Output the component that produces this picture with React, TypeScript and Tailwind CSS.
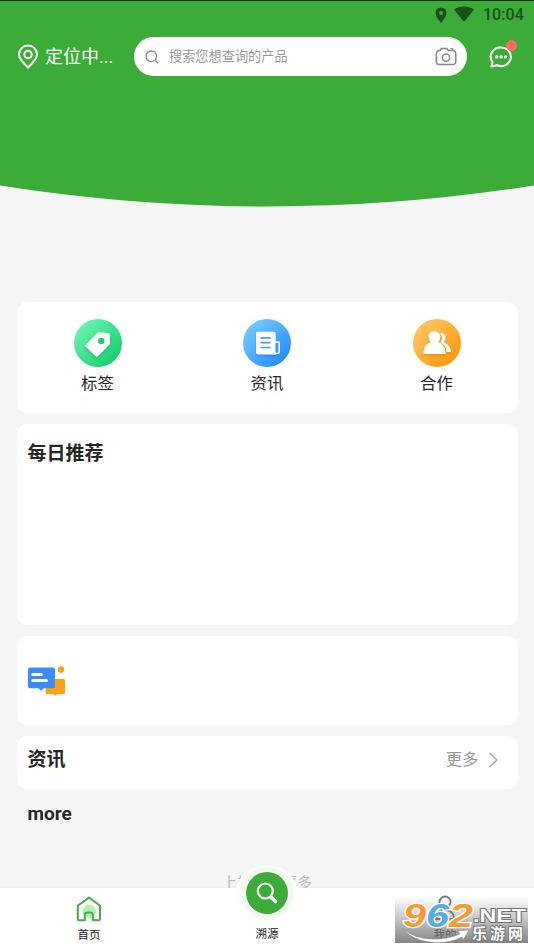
import type { ReactNode } from "react";

const StatusBar = () => (
  <div className="flex h-[29px] items-center justify-end border-t border-[#0d2b0c] pr-[10px] text-[#18521a]">
    <svg width="12" height="16" viewBox="0 0 12 16" fill="currentColor">
      <path fillRule="evenodd" d="M6 .4A5.5 5.5 0 0 0 .5 5.9C.5 10 6 15.8 6 15.8S11.500 10 11.500 5.900A5.500 5.500 0 0 0 6 .4Zm0 3.500a2 2 0 1 1 0 4 2 2 0 0 1 0-4Z" />
    </svg>
    <svg className="ml-[7px] mt-[-2px]" width="20" height="16" viewBox="0 0 20 16" fill="currentColor">
      <path d="M0 3.700C5.700-.6 14.300-.6 20 3.700L10 15.700Z" />
    </svg>
    <span className="ml-[9px] text-[16px] leading-5 font-medium tracking-[0.1px]">10:04</span>
  </div>
);

const Header = () => (
  <header className="h-[207px] shrink-0">
    <div className="h-[185px] bg-[#3bac37]">
      <StatusBar />
      <div className="mt-2 flex h-[39px] items-center">
        <svg className="ml-[17px]" width="22" height="25" viewBox="0 0 22 25" fill="none" stroke="white" strokeWidth="2">
          <path d="M11 1.500a9 9 0 0 0-9 9C2 15.500 7.500 20 11 23.500 14.500 20 20 15.500 20 10.500a9 9 0 0 0-9-9Z" />
          <circle cx="11" cy="10.500" r="3.700" />
        </svg>
        <span className="ml-[6px] w-[89px] text-[18px] leading-6 text-white">定位中...</span>
        <div className="flex h-[39px] w-[333px] items-center rounded-full bg-white pl-[11px] pr-[10px]">
          <svg width="14" height="14" viewBox="0 0 14 14" fill="none" stroke="#8d8d8d" strokeWidth="1.400">
            <circle cx="6.300" cy="6.300" r="5.300" />
            <path d="m10.200 10.200 2.800 3" />
          </svg>
          <span className="ml-[10px] flex-1 text-[13.200px] leading-5 text-[#999]">搜索您想查询的产品</span>
          <svg width="22" height="19" viewBox="0 0 22 19" fill="none" stroke="#858585" strokeWidth="1.500">
            <path d="M5.200 3.600 6.300 1.500H12l1.300 2.100H18a2.800 2.800 0 0 1 2.800 2.800v8.400a2.800 2.800 0 0 1-2.800 2.800H4.200a2.800 2.800 0 0 1-2.800-2.800V6.400a2.800 2.800 0 0 1 2.800-2.800Z" />
            <circle cx="11" cy="10.700" r="3.600" />
            <path d="M15.700 1.700h2.600" />
          </svg>
        </div>
        <div className="relative ml-[22px] h-[24px] w-[30px]">
          <svg width="24" height="24" viewBox="0 0 24 24" fill="none">
            <path d="M12.200 2.500a9.700 9.300 0 1 1-4.600 17.500c-1.500 1-3.200 1.500-5.400 1.500 1-1.400 1.400-2.800 1.200-4.500A9.700 9.300 0 0 1 12.200 2.500Z" stroke="white" strokeWidth="2" strokeLinejoin="round" />
            <circle cx="7.700" cy="11.900" r="1.700" fill="white" />
            <circle cx="12.100" cy="11.900" r="1.700" fill="white" />
            <circle cx="16.500" cy="11.900" r="1.700" fill="white" />
          </svg>
          <span className="absolute left-[17px] top-[-5px] size-[11px] rounded-full bg-[#ff6d60]" />
        </div>
      </div>
    </div>
    <svg className="block h-[22px] w-full" viewBox="0 0 534 22" preserveAspectRatio="none">
      <path d="M0 0V.5Q267 42.500 534 .5V0Z" fill="#3bac37" />
    </svg>
  </header>
);

const TagIcon = () => (
  <svg width="48" height="48" viewBox="0 0 48 48">
    <defs>
      <linearGradient id="tag" x1="0" y1="0" x2="1" y2="1">
        <stop offset="0.100" stopColor="#6cf5b5" />
        <stop offset="0.900" stopColor="#15cc69" />
      </linearGradient>
    </defs>
    <circle cx="24" cy="24" r="24" fill="url(#tag)" />
    <path d="m11.500 26 12-12.200c.5-.5 1-.7 1.700-.6l8.800.7c1 .1 1.600.7 1.700 1.700l.4 8.300c0 .8-.2 1.400-.7 1.900L24 37.200c-.8.800-1.700.8-2.500 0L11.500 27.600c-.5-.5-.5-1.100 0-1.600Z" fill="white" className="drop-shadow-[0_2px_1px_#0b9c4d66]" />
    <circle cx="27.300" cy="22" r="3.200" fill="#25c875" />
  </svg>
);

const NewsIcon = () => (
  <svg width="48" height="48" viewBox="0 0 48 48">
    <defs>
      <linearGradient id="news" x1="0" y1="0" x2="1" y2="1">
        <stop offset="0.100" stopColor="#79cbff" />
        <stop offset="0.900" stopColor="#218dff" />
      </linearGradient>
    </defs>
    <circle cx="24" cy="24" r="24" fill="url(#news)" />
    <g className="drop-shadow-[0_2px_1px_#1468cc66]">
      <path d="M15 12.700h16a1.700 1.700 0 0 1 1.700 1.700v21.200H15.500a2.500 2.500 0 0 1-2.500-2.500V14.400a1.700 1.700 0 0 1 2-1.700Z" fill="white" />
      <path d="M31.700 23h3.500c.6 0 1 .4 1 1v8.600c0 1.200-.8 2-2 2h-2.500Z" fill="#3d9bf5" stroke="white" strokeWidth="1.500" />
    </g>
    <path d="M17.500 18.800h10M17.500 23.700h10M17.500 28.500h10" stroke="#429cf2" strokeWidth="1.700" />
  </svg>
);

const PartnerIcon = () => (
  <svg width="48" height="48" viewBox="0 0 48 48">
    <defs>
      <linearGradient id="partner" x1="0" y1="0" x2="1" y2="1">
        <stop offset="0.100" stopColor="#ffc666" />
        <stop offset="0.900" stopColor="#ff980c" />
      </linearGradient>
    </defs>
    <circle cx="24" cy="24" r="24" fill="url(#partner)" />
    <g fill="white" className="drop-shadow-[0_2px_1px_#cc720066]">
      <path d="M27.200 14.500c2.500-.8 5 .8 5.300 3.800.1 1.900-.5 3.400-1.600 4.400.4 1.300 4 2.300 5.600 5.200.9 1.500 1.500 3.200 1.500 5h-4.400c-.3-5-2.700-7.600-6.500-9.300 2.400-2.500 2.400-6.200.1-9.100Z" />
      <path d="M21.400 12.300c3.400 0 5.900 2.500 5.900 5.800 0 2-.8 3.500-2 4.700.3 1.500 7.200 1.400 7.400 12.200H10.500c.3-10.800 6.800-10.700 7.200-12.200a6.200 6.200 0 0 1-2.200-4.700c0-3.300 2.500-5.800 5.900-5.800Z" />
    </g>
  </svg>
);

const MessageIcon = () => (
  <svg width="38" height="30" viewBox="0 0 38 30">
    <circle cx="33" cy="3.600" r="3.300" fill="#f5a51d" />
    <path d="M19.500 13h15.800a1.800 1.800 0 0 1 1.800 1.800v11.700a1.800 1.800 0 0 1-1.800 1.800h-6.400l-1.700 1.500-1.700-1.500h-6.200a1.800 1.800 0 0 1-1.800-1.800V14.800a1.800 1.800 0 0 1 1.800-1.800Z" fill="#f6a314" />
    <path d="M17.500 22V13H27v7a2 2 0 0 1-2 2Z" fill="#a86f2a" />
    <path d="M2 1.600h23a2 2 0 0 1 2 2v16.600a2 2 0 0 1-2 2h-9.200l-2.600 2.500-2.600-2.500H2a2 2 0 0 1-2-2V3.600a2 2 0 0 1 2-2Z" fill="#3b8bfb" />
    <path d="M4.700 8.400h8.600M4.700 14.600h13.800" stroke="white" strokeWidth="3" strokeLinecap="round" />
  </svg>
);

const HomeIcon = () => (
  <svg width="26" height="26" viewBox="0 0 26 26" fill="none">
    <circle cx="13.300" cy="15.600" r="6.800" fill="#b0f5ad" />
    <path d="M13 1.500 1.800 9.800v13.100c0 .8.500 1.300 1.300 1.300h5.700v-5.400c0-1.500 1-2.400 2.400-2.400h3.200c1.500 0 2.400.9 2.400 2.400v5.400h5.900c.8 0 1.300-.5 1.300-1.300V9.800Z" stroke="#48a747" strokeWidth="2" strokeLinejoin="round" />
  </svg>
);

const shortcuts: { label: string; icon: ReactNode }[] = [
  { label: "标签", icon: <TagIcon /> },
  { label: "资讯", icon: <NewsIcon /> },
  { label: "合作", icon: <PartnerIcon /> },
];

const Watermark = () => (
  <svg className="absolute left-[395px] top-[9px]" width="139" height="46" viewBox="0 0 139 46">
    <defs>
      <linearGradient id="shade" x1="0" y1="0" x2="0" y2="1">
        <stop offset="0" stopColor="#777" stopOpacity="0" />
        <stop offset="1" stopColor="#777" stopOpacity="0.900" />
      </linearGradient>
    </defs>
    <rect width="133" height="46" fill="url(#shade)" />
    <path d="M7 31c13 13 40 14 58 6l-2-3 11-1-6 10-1-3C48 50 18 46 7 31Z" fill="white" stroke="#888" strokeWidth="0.500" />
    <g fontFamily="'Liberation Sans', sans-serif" fontWeight="bold" fontStyle="italic" fontSize="34" stroke="white" strokeWidth="2.500" paintOrder="stroke">
      <text x="8" y="30" textLength="23" lengthAdjust="spacingAndGlyphs" fill="#f79a31">9</text>
      <text x="31" y="30" textLength="23" lengthAdjust="spacingAndGlyphs" fill="#55aee3">6</text>
      <text x="54" y="30" textLength="24" lengthAdjust="spacingAndGlyphs" fill="#f79a31">2</text>
    </g>
    <g fill="white" stroke="#777" strokeWidth="2" paintOrder="stroke" fontWeight="bold">
      <text x="78" y="25" textLength="53" lengthAdjust="spacingAndGlyphs" fontFamily="'Liberation Sans', sans-serif" fontSize="19">.NET</text>
      <text x="77" y="42" textLength="51" fontFamily="'Noto Sans CJK SC', sans-serif" fontSize="15">乐游网</text>
    </g>
  </svg>
);

const TabBar = () => (
  <nav className="relative grid h-[61px] grid-cols-3 bg-white text-center text-[11.500px] leading-4 text-[#222] shadow-[0_-1px_2px_rgba(0,0,0,0.03)]">
    <div className="flex flex-col items-center pt-[8px]">
      <HomeIcon />
      <span className="mt-[5px]">首页</span>
    </div>
    <div className="relative flex justify-center">
      <div className="absolute top-[-23px] size-[66px] rounded-full bg-white" />
      <div className="absolute top-[-16px] flex size-[42px] items-center justify-center rounded-full bg-[#3bac37] shadow-[0_0_0_2px_#fff,0_0_6px_3px_#d5f3d2]">
        <svg width="22" height="22" viewBox="0 0 22 22" fill="none" stroke="white">
          <circle cx="9.300" cy="9" r="7.500" strokeWidth="2.200" />
          <path d="m15 15 4.500 4.500" strokeWidth="3.500" strokeLinecap="round" />
        </svg>
      </div>
      <span className="relative mt-[38px]">溯源</span>
    </div>
    <div className="flex flex-col items-center pt-[7px]">
      <svg width="22" height="27" viewBox="0 0 22 27" fill="none" stroke="#777" strokeWidth="1.800">
        <circle cx="11" cy="7" r="5.500" />
        <path d="M2 24c0-6 4-9 9-9s9 3 9 9Z" />
      </svg>
      <span className="mt-[5px]">我的</span>
    </div>
    <Watermark />
  </nav>
);

export default function App() {
  return (
    <div className="flex h-[949px] w-full flex-col overflow-hidden bg-[#f5f5f5] font-['Roboto','Noto_Sans_CJK_SC',sans-serif] text-[#262626]">
      <Header />
      <main className="flex flex-1 flex-col px-[16.500px] pt-[95px]">
        <section className="grid h-[111px] grid-cols-3 justify-between rounded-[11px] bg-white pt-[17px]" style={{ gridTemplateColumns: "162px 1fr 162px" }}>
          {shortcuts.map(({ label, icon }) => (
            <div key={label} className="flex flex-col items-center">
              {icon}
              <span className="mt-[6px] text-[16.400px] leading-[22px]">{label}</span>
            </div>
          ))}
        </section>
        <section className="mt-[11px] h-[201px] rounded-[11px] bg-white px-[11px] pt-[17px]">
          <h2 className="text-[19px] leading-[26px] font-bold">每日推荐</h2>
        </section>
        <section className="mt-[11px] flex h-[89px] items-center rounded-[11px] bg-white px-[11px]">
          <MessageIcon />
        </section>
        <section className="mt-[11px] flex h-[53px] items-center justify-between rounded-[11px] bg-white pl-[11px] pr-[19px] pb-[5px]">
          <h2 className="text-[19px] leading-[26px] font-bold">资讯</h2>
          <div className="flex items-center gap-[9px] text-[#999]">
            <span className="text-[16.400px] leading-6">更多</span>
            <svg width="11" height="16" viewBox="0 0 11 16" fill="none" stroke="#aaa" strokeWidth="1.600">
              <path d="m1.500 1 7.500 7-7.500 7" />
            </svg>
          </div>
        </section>
        <h2 className="mt-[12px] pl-[11px] text-[19px] leading-[26px] font-bold">more</h2>
        <p className="mt-[46px] h-[15px] text-center text-[15px] leading-5 text-[#bbb]">上拉加载更多</p>
      </main>
      <TabBar />
    </div>
  );
}
